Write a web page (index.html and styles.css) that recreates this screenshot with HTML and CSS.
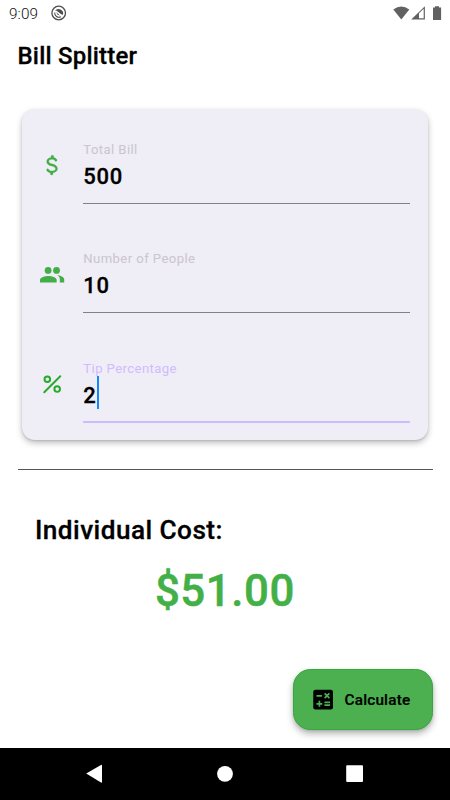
FILE: index.html
```html
<!DOCTYPE html>
<html lang="en">
<head>
<meta charset="utf-8">
<title>Bill Splitter</title>
<link rel="stylesheet" href="styles.css">
</head>
<body>
<div class="screen">
  <header class="status">
    <span class="clock">9:09</span>
    <svg class="notice" width="16" height="16" viewBox="0 0 16 16"><circle cx="7.7" cy="8" r="6.8" fill="none" stroke="#4d4d4d" stroke-width="1.3"/><path d="M3.9 6.1A4.5 4.5 0 0 1 12 9.7L10.2 9.3 5.3 5.4Z" fill="#4d4d4d"/><path d="M3.7 7.5A4.2 4.2 0 0 0 9.8 11.7" fill="none" stroke="#4d4d4d" stroke-width="1.1"/><path d="M5.2 7 8.9 10.4 6.6 9.8Z" fill="#4d4d4d"/></svg>
    <svg class="signals" width="50" height="16" viewBox="0 0 50 16"><path d="M0.3 3.4Q8.3-2.4 16.3 3.4L8.3 13.4Z" fill="#616161"/><path d="M18.2 13.4 31.9 0.2V13.4Z" fill="#616161"/><path d="M26 7.3 30.7 2.8V12.2H26Z" fill="#fff"/><path d="M40 1.6H42V0.2H46V1.6H48.1V13.9H40Z" fill="#616161"/></svg>
  </header>
  <h1 class="title">Bill Splitter</h1>
  <main>
    <section class="card">
      <div class="row">
        <svg class="icon" viewBox="0 0 24 24"><path stroke="#2fab34" stroke-width=".25" d="M12.2 10.9c-2.4-.65-3.3-1.2-3.3-2.25 0-1.15 1.1-1.95 2.9-1.95 1.4 0 2.3.5 2.8 1.35.15.35.6.65 1 .5l.2-.08c.6-.25.85-.8.6-1.3-.6-1.1-1.7-1.85-3-2.15V4.2a1.2 1.2 0 0 0-2.4 0v.84C8.7 5.4 7 6.6 7 8.65c0 2.5 2.1 3.45 4.7 4.15 2.6.7 3.4 1.45 3.4 2.6 0 .85-.75 1.95-3.1 1.95-1.8 0-2.8-.65-3.25-1.6-.2-.42-.65-.6-1.05-.43l-.25.1c-.5.2-.75.8-.5 1.28.65 1.25 1.95 1.95 3.4 2.3v.8a1.2 1.2 0 0 0 2.4 0v-.78c2.1-.35 4.15-1.45 4.15-3.62 0-2.9-2.4-3.85-4.7-4.5z"/></svg>
        <div class="field"><label>Total Bill</label><span class="value">500</span></div>
      </div>
      <div class="row">
        <svg class="icon" viewBox="0 0 24 24"><g transform="translate(0 .6)"><path d="M16.67 12.13C18.04 13.06 19 14.32 19 16v3h4v-3c0-2.18-3.57-3.47-6.33-3.87z"/><circle cx="8.3" cy="8" r="3.1"/><circle cx="16" cy="8" r="3.1"/><path d="M8.5 13C5.8 13 .9 14.1.9 16.5V19h15.2v-2.5C16.1 14.1 11.2 13 8.5 13z"/></g></svg>
        <div class="field"><label>Number of People</label><span class="value">10</span></div>
      </div>
      <div class="row active">
        <svg class="icon" viewBox="0 0 24 24"><g fill="none" stroke="#28aa2c" stroke-width="1.8"><circle cx="7.6" cy="7.5" r="2.55"/><circle cx="16.6" cy="16.5" r="2.55"/><path d="M4.8 19.4 19.4 4.8" stroke-linecap="round"/></g></svg>
        <div class="field"><label>Tip Percentage</label><span class="value">2<i class="caret"></i></span></div>
      </div>
    </section>
    <div class="divider"></div>
    <h2 class="subtitle">Individual Cost:</h2>
    <p class="cost">$51.00</p>
    <button class="calculate"><svg width="26" height="26" viewBox="0 0 24 24"><rect x="3" y="2.6" width="18.2" height="18.2" rx="2"/><path d="M6 8.1h5M13.5 5.8l4.4 4.4M17.9 5.8l-4.4 4.4M6 15.5h5.4M8.7 12.8v5.4M13.3 14.2h5.2M13.3 16.8h5.2" fill="none" stroke="#4caf50" stroke-width="1.6"/></svg><span>Calculate</span></button>
  </main>
  <nav class="navigation"><svg width="450" height="52" viewBox="0 0 450 52" fill="#fff"><path d="M86.2 25.6 101 16.9Q102 16.5 102 17.5V34Q102 35 101 34.5Z"/><circle cx="225" cy="25.8" r="7.9"/><rect x="346.2" y="17.2" width="16.8" height="16.8" rx="1"/></svg></nav>
</div>
</body>
</html>
```
FILE: styles.css
```css
* { box-sizing: border-box; }
body { margin: 0; background: #fff; color: #000; font-family: Roboto, sans-serif; }
.screen { width: 450px; height: 800px; display: flex; flex-direction: column; overflow: hidden; }
.status { height: 27px; display: flex; align-items: flex-start; padding: 5px 7px 0 9px; }
.clock { font-size: 15.3px; line-height: 18px; font-weight: 300; color: #111; width: 42px; letter-spacing: .1px; }
.signals { margin: 1px 0 0 auto; }
.title { margin: 14px 0 0 17.5px; font-size: 24px; line-height: 30px; font-weight: 500; letter-spacing: .2px; -webkit-text-stroke: .3px #000; }
main { flex: 1; display: flex; flex-direction: column; padding: 38px 17px 0; }
.card { height: 331px; margin: 0 5px; border-radius: 13px; background: #efedf5; box-shadow: 0 3px 6px rgba(0,0,0,.26), 0 1px 2px rgba(0,0,0,.1); padding: 30px 18px 0 17px; }
.row { height: 109.4px; display: flex; }
.icon { width: 26.3px; height: 26.3px; margin: 13px 18px 0 0; fill: #43ad47; flex: none; }
.field { height: 65px; flex: 1; border-bottom: 1px solid #827f87; display: flex; flex-direction: column; padding-top: 1px; }
.field label { font-size: 13.1px; line-height: 20px; letter-spacing: .42px; color: #cac5d0; }
.value { display: flex; align-items: flex-start; height: 33px; font-size: 22px; line-height: 33px; font-weight: 500; letter-spacing: .7px; -webkit-text-stroke: .3px #000; }
.active .field { height: 65px; padding-top: 0; border-bottom: 2px solid #cfbcff; }
.active label { line-height: 21px; height: 18px; color: #cfbcff; }
.active .value { line-height: 39px; }
.caret { width: 2px; height: 33px; background: #1687f5; }
.divider { height: 1px; margin: 29px 0 0 1px; background: #555; flex: none; }
.subtitle { margin: 43px 0 0 18px; font-size: 26.2px; line-height: 34px; font-weight: 500; letter-spacing: .44px; -webkit-text-stroke: .3px #000; }
.cost { margin: 17px 0 0; text-align: center; color: #43b047; font-size: 43.8px; line-height: 54px; font-weight: 500; letter-spacing: .6px; -webkit-text-stroke: .5px #43b047; }
.calculate { align-self: flex-end; margin: 51px .5px 0 0; width: 140px; height: 61px; padding: 0 0 0 16px; border: 1px solid #35a93a; border-radius: 17.5px; background: #4caf50; box-shadow: 0 4px 7px rgba(0,0,0,.28), 0 1px 3px rgba(0,0,0,.12); display: flex; align-items: center; color: #000; }
.calculate span { font: 500 15.3px/20px Roboto, sans-serif; letter-spacing: .2px; margin-left: 9px; -webkit-text-stroke: .2px #000; }
.navigation { height: 52px; background: #000; flex: none; }
.navigation svg { display: block; }
```
